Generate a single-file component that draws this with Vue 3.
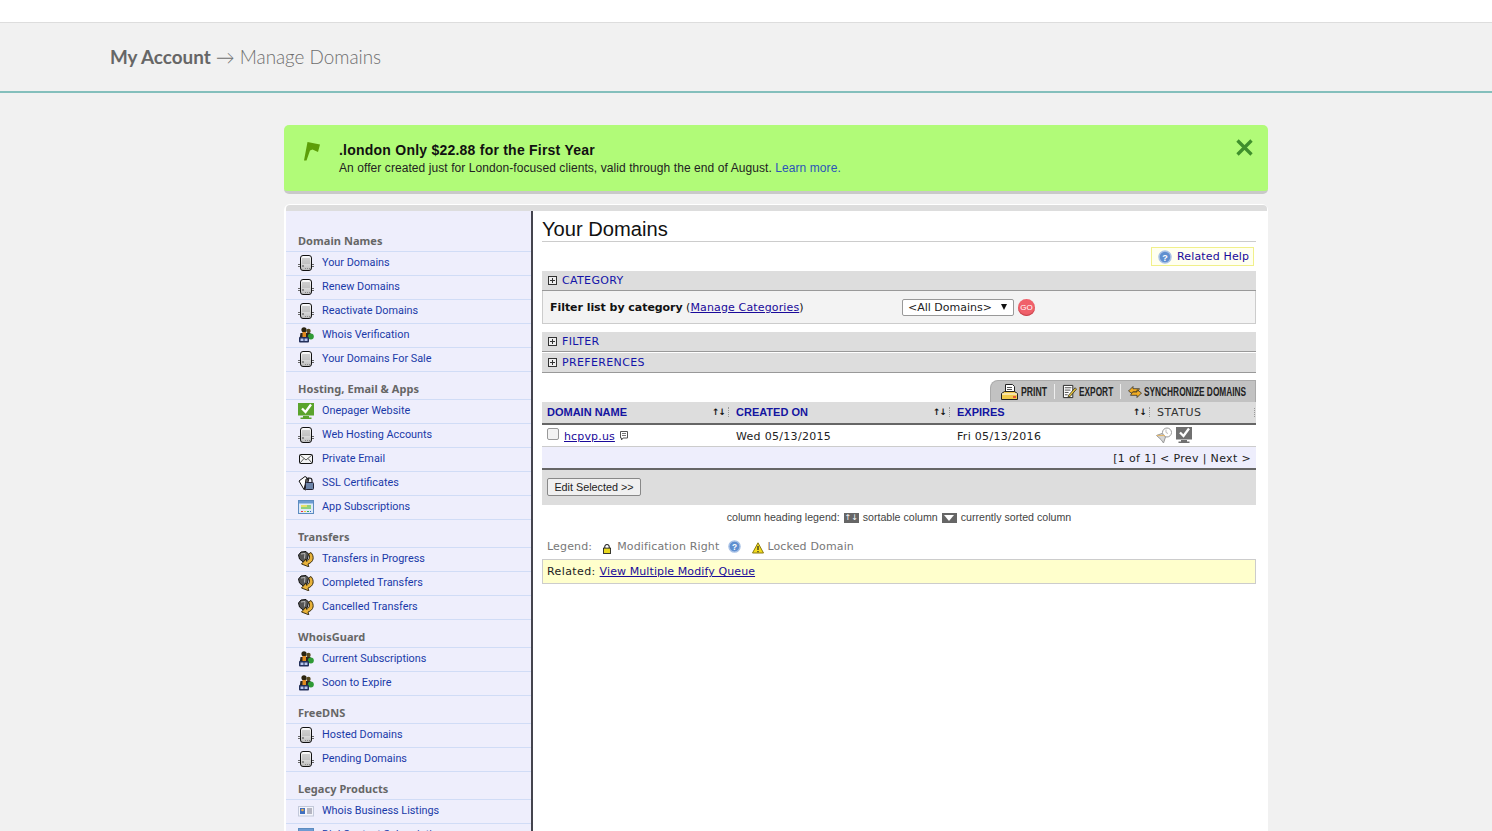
<script setup>
const groups = [
  { title: 'Domain Names', items: [['Your Domains','srv'],['Renew Domains','srv'],['Reactivate Domains','srv'],['Whois Verification','who'],['Your Domains For Sale','srv']] },
  { title: 'Hosting, Email & Apps', items: [['Onepager Website','mon'],['Web Hosting Accounts','srv'],['Private Email','mail'],['SSL Certificates','ssl'],['App Subscriptions','appw']] },
  { title: 'Transfers', items: [['Transfers in Progress','trn'],['Completed Transfers','trn'],['Cancelled Transfers','trn']] },
  { title: 'WhoisGuard', items: [['Current Subscriptions','who'],['Soon to Expire','who']] },
  { title: 'FreeDNS', items: [['Hosted Domains','srv'],['Pending Domains','srv']] },
  { title: 'Legacy Products', items: [['Whois Business Listings','biz'],['Dial Contact Subscriptions','appw']] },
]
const cols = ['DOMAIN NAME', 'CREATED ON', 'EXPIRES']
</script>

<template>
  <svg class="defs" width="0" height="0" aria-hidden="true">
    <defs>
      <linearGradient id="gsrv" x1="0" y1="0" x2="0" y2="1"><stop offset="0" stop-color="#fff"/><stop offset="1" stop-color="#bbb"/></linearGradient>
      <symbol id="srv" viewBox="0 0 16 16">
        <path d="M0 9.500h3M13 9.500h3M0 11.500h3M13 11.500h3" stroke="#666" stroke-width="1"/>
        <rect x="2.500" y="0.500" width="11" height="15" rx="2.500" fill="url(#gsrv)" stroke="#111"/>
        <path d="M4 4h8M4 6h8M4 8h8" stroke="#aaa"/>
        <circle cx="5" cy="11" r="1" fill="#777"/>
        <path d="M7 13.500h5" stroke="#888" stroke-dasharray="1 1"/>
      </symbol>
      <symbol id="who" viewBox="0 0 16 16">
        <circle cx="6" cy="2.800" r="2.600" fill="#2a2410"/>
        <circle cx="10.500" cy="4" r="2.200" fill="#55481f"/>
        <path d="M1.500 12 2.500 6h10l1 6z" fill="#2b2620"/>
        <rect x="4.500" y="5" width="3.500" height="6" fill="#e08a1e"/>
        <circle cx="12.800" cy="9.500" r="3" fill="#2f9a35"/>
        <rect x="1" y="10" width="10" height="5.500" rx="1" fill="#222f5a"/>
        <rect x="2.500" y="11.500" width="3" height="2.500" fill="#b7c6ee"/><rect x="6.500" y="11.500" width="3" height="2.500" fill="#b7c6ee"/>
      </symbol>
      <symbol id="mon" viewBox="0 0 16 16">
        <rect width="16" height="12.500" fill="#5aa32d"/>
        <path d="M5 13h6v1.500h2.500V16h-11v-1.500h2.500z" fill="#5aa32d"/>
        <path d="M4 5.500 7.500 9 13 1.500" fill="none" stroke="#fff" stroke-width="2.300"/>
      </symbol>
      <symbol id="mail" viewBox="0 0 16 16">
        <rect x="1.500" y="3.500" width="13" height="9" rx="1" fill="#f4f4f4" stroke="#111"/>
        <path d="M2 4l6 5 6-5M2 12l4-4.500M14 12l-4-4.500" fill="none" stroke="#555"/>
      </symbol>
      <symbol id="ssl" viewBox="0 0 16 16">
        <path d="M1 6 7 1.500 9.500 3 6 14.500z" fill="#fff" stroke="#111"/>
        <path d="M6.500 14.500 8 4l3-1-3 12z" fill="#ddd" stroke="#111"/>
        <path d="M9 7.500V5.500a2.500 2.500 0 0 1 5 0v2" fill="none" stroke="#222" stroke-width="1.200"/>
        <rect x="7.500" y="7.500" width="8" height="7" rx="1" fill="#6c84a8" stroke="#223"/>
      </symbol>
      <symbol id="appw" viewBox="0 0 16 16">
        <rect x="0.500" y="1.500" width="15" height="13" fill="#dfeaf7" stroke="#5d8cc0"/>
        <rect x="1" y="2" width="14" height="2.500" fill="#6d9bd3"/>
        <rect x="3" y="6" width="10" height="4" fill="#8fd07d"/>
        <path d="M3 6h6v2H3z" fill="#e8e06a"/>
        <path d="M3 12.500h2" stroke="#e34"/><path d="M6 12.500h2" stroke="#ec3"/><path d="M9 12.500h2" stroke="#3a5"/><path d="M12 12.500h1" stroke="#36c"/>
      </symbol>
      <symbol id="trn" viewBox="0 0 16 16">
        <path d="M0.500 4 3 1 8 0.500 10.500 3 9.500 8 6.500 12 1.500 8z" fill="#555" stroke="#111"/>
        <path d="M3 3l4-.5-.5 5" fill="none" stroke="#bbb"/>
        <path d="M13 1.500c3.500 4 3 9.500-3 11.500l.8 2.800L3.500 13 8 8l.5 2.300C11.500 9 12.500 5.500 10.500 3z" fill="#e8b23a" stroke="#2a2006" stroke-width=".9"/>
      </symbol>
      <symbol id="biz" viewBox="0 0 16 16">
        <rect x="0.500" y="3.500" width="15" height="9.500" fill="#f4f5fb" stroke="#c3c9da"/>
        <rect x="2" y="5" width="5" height="6" fill="#3f6fc0"/>
        <circle cx="4.500" cy="7" r="1.300" fill="#f0b04a"/>
        <path d="M9 6h5M9 8h5M9 10h5" stroke="#778"/>
      </symbol>
      <symbol id="help" viewBox="0 0 14 14">
        <circle cx="7" cy="7" r="6" fill="#5f8fd0" stroke="#a9c2e6" stroke-width="1.500"/>
        <text x="7" y="10.500" text-anchor="middle" font-family="Liberation Sans" font-weight="700" font-size="9" fill="#fff">?</text>
      </symbol>
    </defs>
  </svg>

  <div class="page">
    <div class="topbar"></div>
    <header class="crumb">
      <div class="crumb-text"><strong>My Account</strong> → Manage Domains</div>
    </header>

    <div class="wrap">
      <section class="promo">
        <svg class="flag" width="18" height="20" viewBox="0 0 18 20"><path d="M4.500 1 17 3.500 15 11 9.500 8.500 7 9.500 3.500 19.500 1 19.500z" fill="#5c9e08"/></svg>
        <div class="promo-text">
          <div class="promo-title">.london Only $22.88 for the First Year</div>
          <div class="promo-sub">An offer created just for London-focused clients, valid through the end of August. <a>Learn more.</a></div>
        </div>
        <svg class="close" width="17" height="17" viewBox="0 0 17 17"><path d="M1.500 1.500l14 14M15.500 1.500l-14 14" stroke="#3f8f2c" stroke-width="3.300"/></svg>
      </section>

      <section class="card">
        <div class="card-top"></div>
        <div class="card-body">
          <nav class="side">
            <div v-for="g in groups" :key="g.title">
              <h4 class="side-head">{{ g.title }}</h4>
              <a v-for="it in g.items" :key="it[0]" class="side-row">
                <svg class="side-ico" width="16" height="16"><use :href="'#' + it[1]"/></svg>
                <span>{{ it[0] }}</span>
              </a>
            </div>
          </nav>

          <main class="main">
            <h1 class="title">Your Domains</h1>
            <div class="help-line">
              <a class="help"><svg width="14" height="14"><use href="#help"/></svg>Related Help</a>
            </div>

            <div class="bar"><i class="plus"></i>CATEGORY</div>
            <div class="filter">
              <div class="filter-label"><b>Filter list by category</b> (<a class="lnk mc">Manage Categories</a>)</div>
              <div class="select">&lt;All Domains&gt;<span class="caret"></span></div>
              <span class="go">GO</span>
            </div>
            <div class="bar bar-filter"><i class="plus"></i>FILTER</div>
            <div class="bar bar-pref"><i class="plus"></i>PREFERENCES</div>

            <div class="tab-line">
              <div class="tabs">
                <span class="tab">
                  <svg class="ico-print" width="17" height="16" viewBox="0 0 17 16"><path d="M4.500.5h7l2 2v6h-9z" fill="#fff" stroke="#222"/><path d="M6 3.500h5M6 5.500h5" stroke="#555"/><path d="M.5 9.500l3-2h10l3 2v6H.5z" fill="#f0c94a" stroke="#222"/><path d="M1 10h15" stroke="#fff"/><path d="M12 13h3" stroke="#d33" stroke-width="1.500"/></svg>
                  <span class="tl tl-print"><span>PRINT</span></span>
                </span>
                <span class="tab">
                  <svg width="15" height="15" viewBox="0 0 16 16"><path d="M1.500 1.500h10v13h-10z" fill="#fff" stroke="#222"/><path d="M3 4h7M3 6.500h6M3 9h4M3 11.500h3" stroke="#444"/><path d="M7 12 14 4l1.500 1.500-7 8-2 .5z" fill="#e8c53a" stroke="#222" stroke-width=".8"/></svg>
                  <span class="tl tl-export"><span>EXPORT</span></span>
                </span>
                <span class="tab">
                  <svg width="14" height="14" viewBox="0 0 14 14"><path d="M.5 6 5 1.500v2.200h6.500L9.500 7H5v2.300z" fill="#f0ac24" stroke="#222" stroke-width=".7"/><path d="M13.500 8 9 12.500v-2.200H2.500L4.500 7H9V4.700z" fill="#f0ac24" stroke="#222" stroke-width=".7"/></svg>
                  <span class="tl tl-sync"><span>SYNCHRONIZE DOMAINS</span></span>
                </span>
              </div>
            </div>

            <div class="grid thead">
              <div v-for="c in cols" :key="c" class="th">
                <a>{{ c }}</a><span class="sort">↑↓</span>
              </div>
              <div class="th status"><span>STATUS</span><span class="dots"></span></div>
            </div>
            <div class="grid trow">
              <div class="td first">
                <input type="checkbox" class="check" aria-label="Select hcpvp.us" />
                <a class="lnk dom">hcpvp.us</a>
                <svg class="note" width="10" height="11" viewBox="0 0 10 11"><path d="M1.500.500h7v6.500H4L2.500 9V7h-1z" fill="#fff" stroke="#555"/><path d="M3 2.500h4M3 4.500h4" stroke="#777"/></svg>
              </div>
              <div class="td">Wed 05/13/2015</div>
              <div class="td">Fri 05/13/2016</div>
              <div class="td st-icons">
                <svg width="17" height="16" viewBox="0 0 17 16"><circle cx="11" cy="5.500" r="4.500" fill="#fff" stroke="#999"/><path d="M10 2.500v3l2 1" fill="none" stroke="#bbb"/><path d="M.5 8.500l5.500-2 3.500 3.500-2 6-2.500-3.500z" fill="#d6d6d6" stroke="#999"/><path d="M1 8.500h8" stroke="#e2b870" stroke-width="1.200"/></svg>
                <svg width="16" height="16" viewBox="0 0 16 16"><rect width="16" height="12.500" fill="#707070"/><path d="M5 13h6v1.500h2.500V16h-11v-1.500h2.500z" fill="#707070"/><path d="M4 5.500 7.500 9 13 1.500" fill="none" stroke="#fff" stroke-width="2.300"/></svg>
              </div>
            </div>
            <div class="pager">[1 of 1] &lt; Prev | Next &gt;</div>
            <div class="actions"><button class="edit" type="button">Edit Selected &gt;&gt;</button></div>

            <div class="hint">
              column heading legend:
              <i class="chip">↑↓</i> sortable column
              <i class="chip chip-tri"></i> currently sorted column
            </div>

            <div class="legend">
              <span>Legend:</span>
              <svg class="lock" width="8" height="10" viewBox="0 0 9 11"><path d="M2 5V3a2.500 2.500 0 0 1 5 0v2" fill="none" stroke="#222" stroke-width="1.200"/><rect x=".5" y="4.500" width="8" height="6" fill="#e8d820" stroke="#222"/></svg>
              <span class="l1">Modification Right</span>
              <svg class="lq" width="13" height="13"><use href="#help"/></svg>
              <svg class="warn" width="12" height="12" viewBox="0 0 12 12"><path d="M6 .8 11.500 11H.5z" fill="#f3dc1e" stroke="#8a7a10"/><path d="M6 4v4M6 9v1.200" stroke="#222" stroke-width="1.200"/></svg>
              <span class="l2">Locked Domain</span>
            </div>
            <div class="related">Related: <a class="lnk vq">View Multiple Modify Queue</a></div>
          </main>
        </div>
      </section>
    </div>
  </div>
</template>

<style>
html, body { margin: 0; height: 831px; overflow: hidden; background: #f1f1f1; }
</style>

<style scoped>
.defs { position: absolute; }
.page { font-family: "DejaVu Sans", sans-serif; font-size: 11px; color: #222; }
.topbar { height: 22px; background: #fff; border-bottom: 1px solid #ddd; }
.crumb { height: 66px; padding-bottom: 2px; border-bottom: 2px solid #84bfbc; background: #f1f1f1; padding-left: 110px; display: flex; align-items: center; }
.crumb-text { font-family: Lato, sans-serif; font-size: 18.85px; color: #6e6e6e; font-weight: 300; }
.crumb-text strong { font-weight: 700; color: #666; }
.wrap { width: 984px; margin: 32px 0 0 284px; }
.promo { height: 66px; background: #b1fb78; border-bottom: 3px solid #c9c9c9; border-radius: 5px; display: flex; padding-left: 19px; position: relative; }
.flag { margin-top: 16px; flex: none; }
.promo-text { margin-left: 18px; padding-top: 16px; font-family: "Liberation Sans", sans-serif; color: #222; }
.promo-title { font-weight: 700; font-size: 14px; letter-spacing: .23px; line-height: 18px; color: #111; }
.promo-sub { font-size: 12px; line-height: 18px; letter-spacing: .075px; }
.promo-sub a { color: #2a55b8; }
.close { position: absolute; right: 15px; top: 14px; }
.card { margin-top: 10px; background: #fff; border-radius: 6px 6px 0 0; padding: 1px 0 0 2px; }
.card-top { height: 6px; background: #ddd; border-radius: 4px 4px 0 0; margin-right: 1px; }
.card-body { display: flex; align-items: stretch; height: 640px; }
.side { width: 247px; box-sizing: border-box; background: #eeeefc; border-right: 2px solid #44444e; padding-top: 13px; flex: none; }
.side-head { margin: 0; height: 28px; box-sizing: border-box; padding: 10px 0 0 12px; line-height: 14px; font-family: "Noto Sans", sans-serif; font-size: 11px; letter-spacing: .05px; font-weight: 700; color: #666; border-bottom: 1px solid #d0dcf6; }
.side-row { display: flex; height: 24px; box-sizing: border-box; padding: 3px 0 0 12px; border-bottom: 1px solid #d0dcf6; font-family: Roboto, sans-serif; font-size: 10.85px; line-height: 15px; color: #1a3aa8; }
.side-ico { margin: 0 8px 0 0; flex: none; }
.main { flex: 1; padding: 0 12px 0 9px; min-width: 0; }
.title { margin: 0; height: 30px; border-bottom: 1px solid #ccc; font: 400 20.15px/36px "Liberation Sans", sans-serif; color: #111; box-sizing: content-box; }
.help-line { display: flex; justify-content: flex-end; padding: 5px 2px 5px 0; }
.help { height: 19px; width: 103px; box-sizing: border-box; background: #fffff0; border: 1px solid #f1f08a; display: flex; align-items: center; gap: 5px; padding-left: 6px; color: #1a0a9a; letter-spacing: .15px; }
.bar { height: 20px; box-sizing: border-box; background: #ddd; border-bottom: 1px solid #999; display: flex; align-items: center; padding-left: 6px; color: #1414a8; letter-spacing: .35px; }
.plus { width: 9px; height: 9px; border: 1px solid #333; margin-right: 5px; flex: none; background: linear-gradient(#333,#333) center/5px 1px no-repeat, linear-gradient(#333,#333) center/1px 5px no-repeat, #eee; box-sizing: border-box; }
.filter { height: 33px; box-sizing: border-box; background: #f3f3f3; border: 1px solid #ccc; border-top: 0; display: flex; align-items: center; padding-left: 7px; }
.filter-label { width: 352px; color: #111; }
.filter-label b { letter-spacing: -.05px; }
.lnk { color: #1a0a9a; text-decoration: underline; }
.mc { letter-spacing: .14px; }
.select { width: 112px; height: 17px; box-sizing: border-box; background: #fff; border: 1px solid #999; border-radius: 2px; line-height: 15px; padding-left: 5px; position: relative; color: #222; }
.caret { position: absolute; right: 6px; top: 4px; border: 3.5px solid transparent; border-top: 6px solid #111; border-bottom: 0; }
.go { width: 17px; height: 17px; margin-left: 4px; border-radius: 50%; background: #f0606a; color: #fff; font-size: 8px; font-family: "Liberation Sans", sans-serif; text-align: center; line-height: 17px; box-shadow: inset 0 -1px 1px #c04048; }
.bar-filter { margin-top: 8px; }
.bar-pref { margin-top: 1px; }
.tab-line { display: flex; justify-content: flex-end; margin-top: 7px; }
.tabs { width: 266px; height: 22px; box-sizing: border-box; background: #c2c2c2; border: 1px solid #aaa; border-bottom: 0; border-radius: 8px 0 0 0; display: flex; align-items: center; padding-left: 10px; font: 700 13px "Liberation Sans", sans-serif; color: #222; }
.tab { display: flex; align-items: center; gap: 2px; padding-right: 7px; margin-right: 7px; border-right: 1px solid #eee; height: 15px; white-space: nowrap; }
.tab:last-child { border-right: 0; padding-right: 0; margin-right: 0; }
.ico-print { margin-right: 1px; }
.tl { display: block; height: 15px; line-height: 15px; overflow: visible; }
.tl span { display: inline-block; transform-origin: 0 50%; }
.tl-print { width: 26px; }
.tl-print span { transform: scaleX(.667); }
.tl-export { width: 34px; }
.tl-export span { transform: scaleX(.64); }
.tl-sync { width: 102px; }
.tl-sync span { transform: scaleX(.64); }
.grid { display: grid; grid-template-columns: 189px 221px 200px 104px; }
.thead { height: 23px; box-sizing: border-box; background: #ddd; border-bottom: 2px solid #666; }
.th { display: flex; justify-content: space-between; align-items: center; padding: 0 2px 1px 5px; font-weight: 700; color: #1414a0; font-family: "Liberation Sans", sans-serif; font-size: 11px; }
.sort { font-size: 9px; color: #111; border-right: 1px dotted #999; padding-right: 3px; letter-spacing: -1px; font-family: "DejaVu Sans", sans-serif; }
.status { color: #333; font-weight: 400; font-family: "DejaVu Sans", sans-serif; font-size: 11px; letter-spacing: .55px; padding-bottom: 0; }
.dots { height: 9px; border-right: 1px dotted #999; margin-right: -1px; }
.trow { height: 22px; box-sizing: border-box; border-bottom: 1px solid #ccc; background: #fff; }
.td { display: flex; align-items: center; padding-left: 5px; padding-top: 1px; color: #222; letter-spacing: .3px; }
.first { position: relative; padding-left: 22px; font-size: 11px; }
.dom { letter-spacing: .15px; }
.check { appearance: none; position: absolute; left: 5px; top: 3px; width: 12px; height: 12px; margin: 0; background: #f3f3f3; border: 1px solid #999; border-radius: 2px; box-sizing: border-box; }
.note { margin-left: 4px; }
.st-icons { padding: 2px 0 0 4px; gap: 3px; align-items: flex-start; }
.pager { height: 23px; box-sizing: border-box; background: #eeeefc; border-bottom: 2px solid #666; text-align: right; padding-right: 5px; line-height: 23px; color: #222; letter-spacing: .35px; }
.actions { height: 35px; background: #ddd; padding: 8px 0 0 5px; box-sizing: border-box; }
.edit { width: 94px; height: 18px; padding: 0; background: #f0f0f0; border: 1px solid #888; border-radius: 2px; font: 10.8px "Liberation Sans", sans-serif; color: #222; }
.hint { text-align: center; margin-top: 6px; height: 12px; font: 10.65px/13px "Liberation Sans", sans-serif; color: #444; }
.chip { display: inline-block; width: 15px; height: 10px; margin: 0 1px; background: #666; color: #fff; font: 8px/10px "DejaVu Sans"; vertical-align: middle; text-align: center; }
.chip-tri { position: relative; }
.chip-tri::after { content: ""; position: absolute; left: 2px; top: 2px; border: 5px solid transparent; border-top: 6px solid #fff; border-bottom: 0; }
.legend { display: flex; align-items: center; height: 17px; margin-top: 15px; padding-left: 5px; color: #777; letter-spacing: .15px; }
.lock { margin-left: 11px; margin-top: 4px; }
.l1 { margin-left: 6px; }
.lq { margin-left: 9px; }
.warn { margin-left: 11px; margin-top: 2px; }
.l2 { margin-left: 3px; }
.related { height: 25px; box-sizing: border-box; margin-top: 4px; background: #ffc; border: 1px solid #ccc; line-height: 24px; padding-left: 4px; color: #222; letter-spacing: .4px; }
.vq { letter-spacing: .1px; }
</style>
